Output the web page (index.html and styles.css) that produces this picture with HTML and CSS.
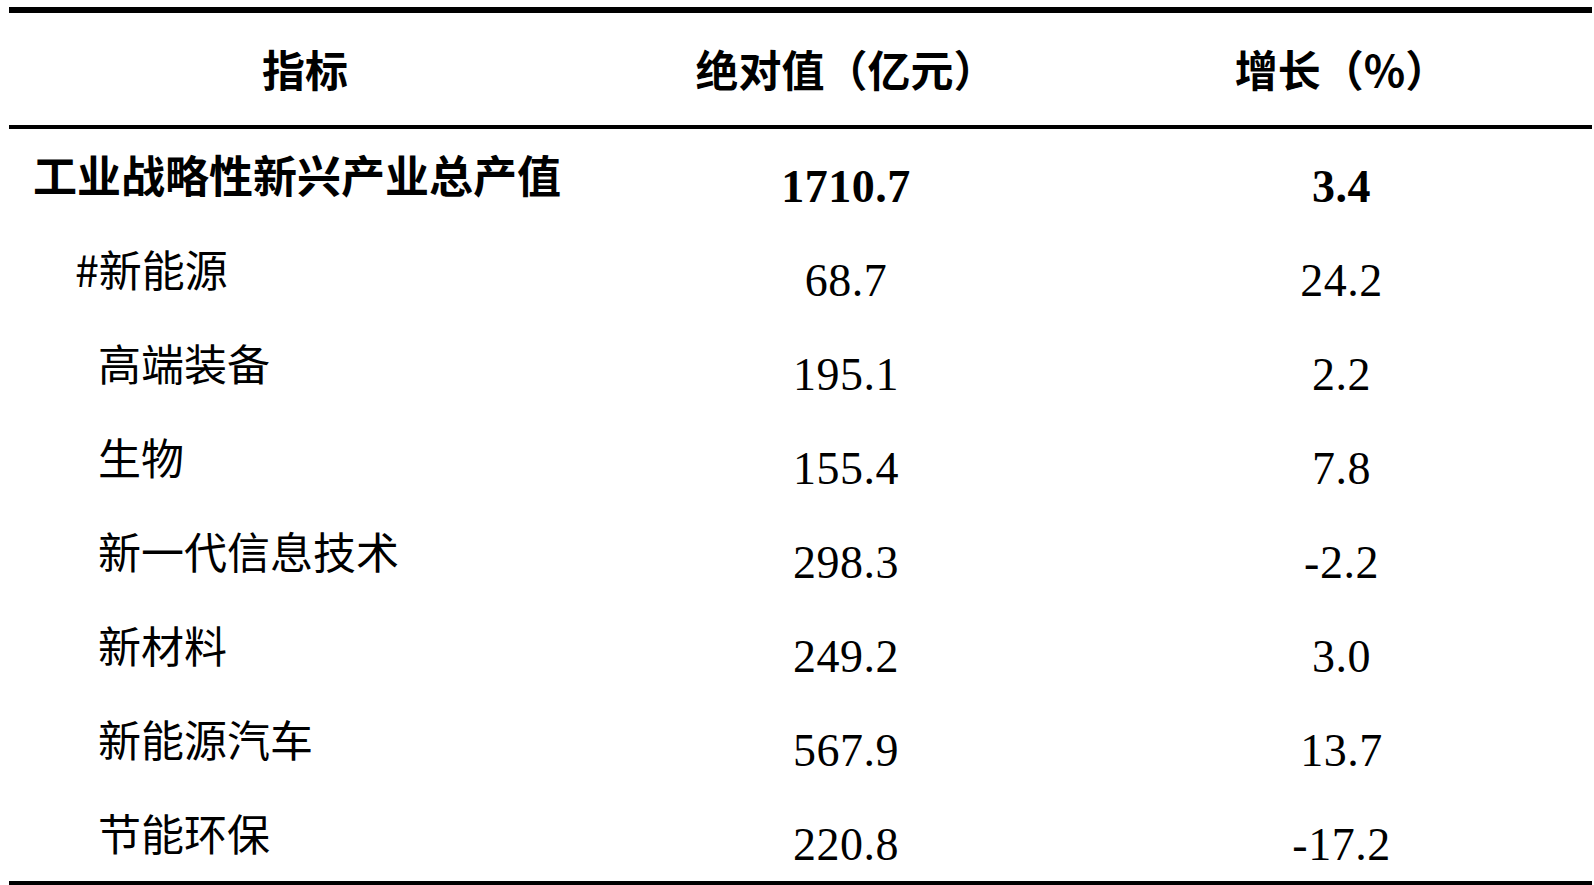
FILE: index.html
```html
<!DOCTYPE html>
<html lang="zh-CN">
<head>
<meta charset="utf-8">
<title>工业战略性新兴产业总产值</title>
<link rel="stylesheet" href="styles.css">
</head>
<body>
<div class="table">
  <div class="row head">
    <div class="cell hd">指标</div>
    <div class="cell hd">绝对值（亿元）</div>
    <div class="cell hd">增长（%）</div>
  </div>
  <div class="row total">
    <div class="cell label main">工业战略性新兴产业总产值</div>
    <div class="cell num">1710.7</div>
    <div class="cell num">3.4</div>
  </div>
  <div class="row">
    <div class="cell label hash">#新能源</div>
    <div class="cell num">68.7</div>
    <div class="cell num">24.2</div>
  </div>
  <div class="row">
    <div class="cell label sub">高端装备</div>
    <div class="cell num">195.1</div>
    <div class="cell num">2.2</div>
  </div>
  <div class="row">
    <div class="cell label sub">生物</div>
    <div class="cell num">155.4</div>
    <div class="cell num">7.8</div>
  </div>
  <div class="row">
    <div class="cell label sub">新一代信息技术</div>
    <div class="cell num">298.3</div>
    <div class="cell num">-2.2</div>
  </div>
  <div class="row">
    <div class="cell label sub">新材料</div>
    <div class="cell num">249.2</div>
    <div class="cell num">3.0</div>
  </div>
  <div class="row">
    <div class="cell label sub">新能源汽车</div>
    <div class="cell num">567.9</div>
    <div class="cell num">13.7</div>
  </div>
  <div class="row">
    <div class="cell label sub">节能环保</div>
    <div class="cell num">220.8</div>
    <div class="cell num">-17.2</div>
  </div>
</div>
</body>
</html>
```
FILE: styles.css
```css
html, body {
  margin: 0;
  padding: 0;
  background: #fff;
  color: #000;
}

body {
  font-family: "Noto Sans CJK SC", "Noto Sans", sans-serif;
}

.table {
  margin: 7px 0 0 9px;
  width: 1583px;
  border-top: 6px solid #000;
  border-bottom: 4px solid #000;
}

.row {
  display: grid;
  grid-template-columns: 592px 490px 501px;
  height: 94px;
}

.row.head {
  height: 112px;
  border-bottom: 4px solid #000;
}

.cell {
  display: flex;
  align-items: center;
  line-height: 1;
}

.hd {
  justify-content: center;
  font-size: 43px;
  font-weight: 700;
  padding-bottom: 2px;
}

.label {
  font-size: 43px;
  font-weight: 400;
  padding-bottom: 4px;
}

.label.main {
  font-size: 44px;
  font-weight: 700;
  padding-left: 24px;
}

.label.hash {
  padding-left: 66px;
}

.label.sub {
  padding-left: 89px;
}

.num {
  justify-content: center;
  font-family: "Liberation Serif", serif;
  font-size: 46px;
  letter-spacing: 0.5px;
  padding-top: 22px;
}

.total .num {
  font-weight: 700;
}
```
